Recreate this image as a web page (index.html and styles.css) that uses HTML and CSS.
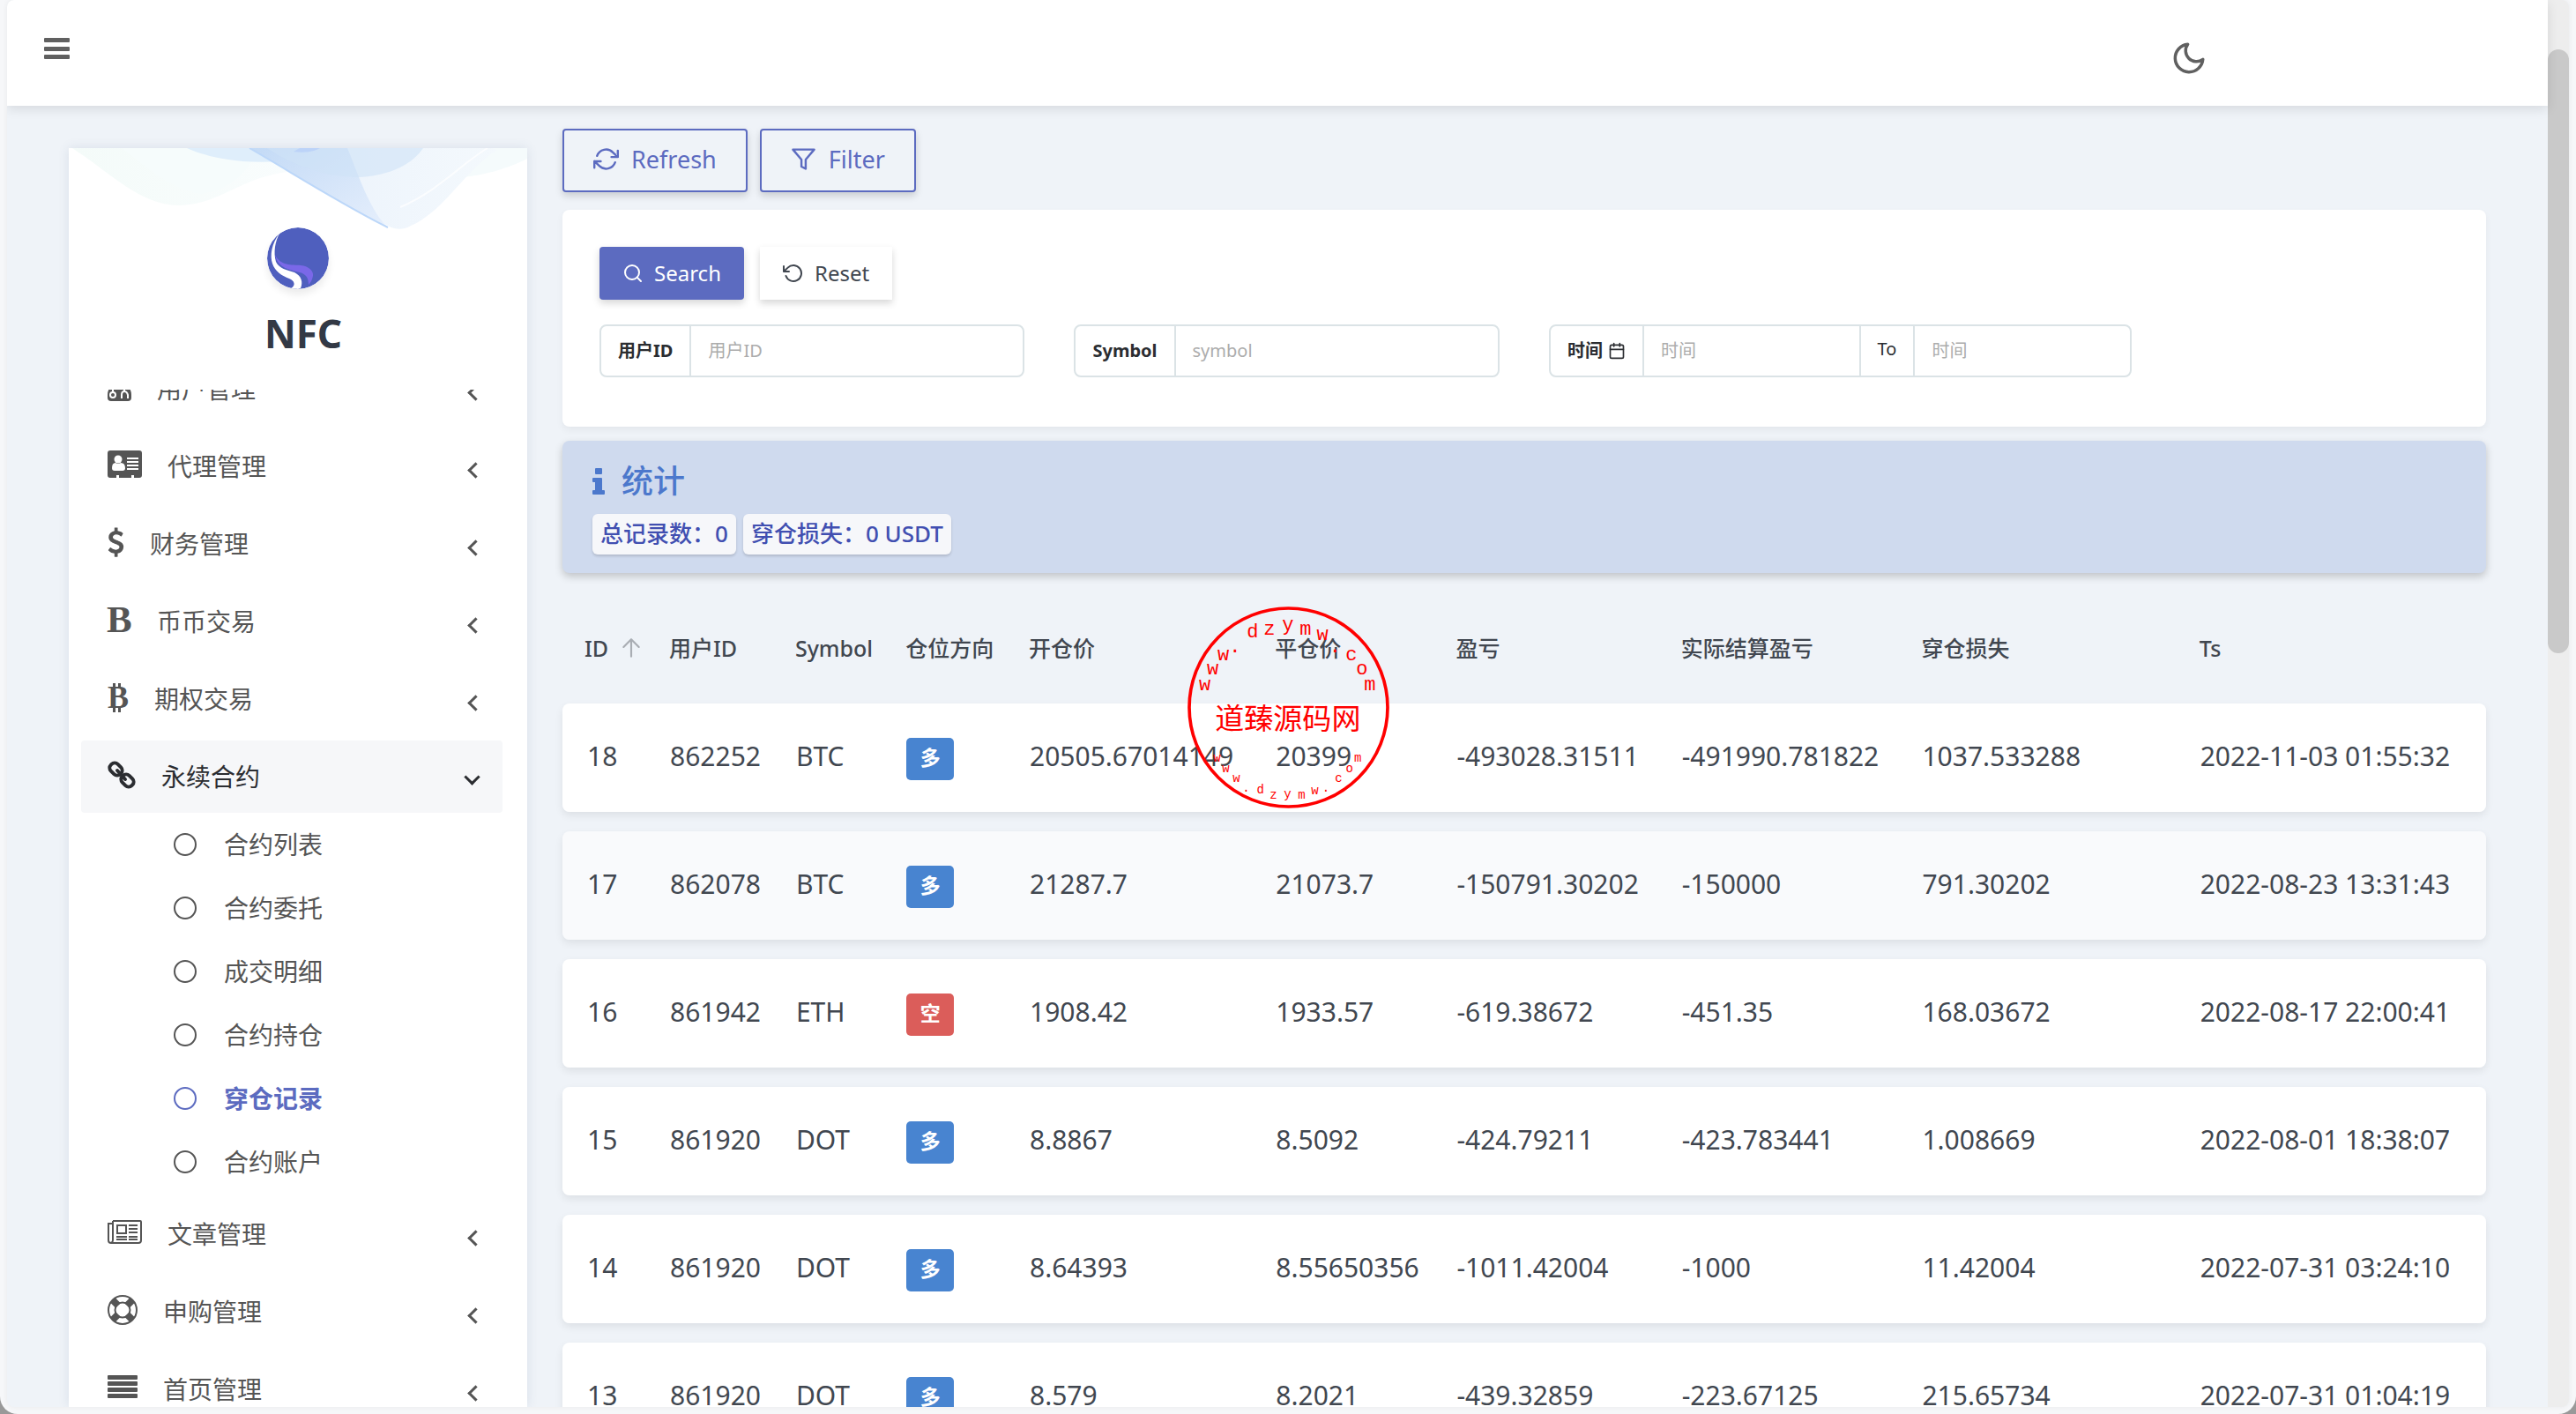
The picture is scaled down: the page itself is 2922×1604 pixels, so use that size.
FILE: index.html
```html
<!DOCTYPE html>
<html lang="zh-CN">
<head>
<meta charset="utf-8">
<title>NFC</title>
<meta name="viewport" content="width=device-width, initial-scale=1">
<link rel="stylesheet" href="styles.css">
</head>
<body>
<div class="frame">
  <div class="window">
    <div class="page">
      <header class="topbar">
        <button class="icon-btn" type="button" aria-label="Menu">
          <svg width="29" height="24" viewBox="0 0 29 24" fill="currentColor"><rect width="29" height="5" rx="1"/><rect y="10" width="29" height="5" rx="1"/><rect y="19" width="29" height="5" rx="1"/></svg>
        </button>
        <button class="icon-btn theme-btn" type="button" aria-label="Theme">
          <svg class="line" width="42" height="42" viewBox="0 0 24 24"><path d="M21 12.79A9 9 0 1 1 11.21 3 7 7 0 0 0 21 12.79z"/></svg>
        </button>
      </header>
      <div class="body">
        <aside class="sidebar">
          <svg class="wave" viewBox="0 0 520 96" preserveAspectRatio="none" aria-hidden="true">
            <defs>
              <linearGradient id="g1" x1="0" y1="0" x2="1" y2="0"><stop offset="0" stop-color="#f4fbf9"/><stop offset="1" stop-color="#fafdfe"/></linearGradient>
              <linearGradient id="g2" x1="0" y1="0" x2="1" y2="1"><stop offset="0" stop-color="#c3daf6"/><stop offset="1" stop-color="#e6effc"/></linearGradient>
              <linearGradient id="g3" x1="0" y1="0" x2="1" y2="0"><stop offset="0" stop-color="#e9f1fb"/><stop offset="1" stop-color="#f4f9fd"/></linearGradient>
            </defs>
            <path d="M4 0C50 30 80 64 125 65C175 64 195 30 260 26L300 0Z" fill="url(#g1)"/>
            <path d="M60 0C90 22 110 44 150 52C190 46 205 22 215 0Z" fill="#f6fcfc"/>
            <path d="M134 0C160 12 200 18 240 15L300 0Z" fill="#dfeefb"/>
            <path d="M430 34C470 33 500 22 520 12V0H400Z" fill="#f5fbfc"/>
            <path d="M205 0L362 88C370 93 380 93 388 88C425 72 450 25 486 2L480 0Z" fill="url(#g3)"/>
            <path d="M205 0C260 32 310 64 362 90C340 70 325 20 316 0Z" fill="url(#g2)"/>
            <path d="M225 0C260 24 300 33 330 33C365 31 390 18 402 0Z" fill="#cfe2f6" opacity=".6"/>
            <path d="M255 4C270 6 280 3 285 0H262Z" fill="#bcd3f8"/>
            <path d="M205 0C260 32 310 64 362 90" fill="none" stroke="#bcd7f9" stroke-width="2"/>
            <path d="M376 67C420 48 445 18 475 0" fill="none" stroke="#fff" stroke-width="2" opacity=".7"/>
          </svg>
          <div class="brand">
            <svg class="logo" viewBox="0 0 70 70" aria-hidden="true">
              <circle cx="35" cy="35" r="35" fill="#4f5fbe"/>
              <path d="M14 7C5 18 3 32 6 41C9 50 17 55 25 58C31 60 33 66 27 69L35 70L38 69C41 62 39 55 31 51C22 48 14 47 10 39C7 28 9 16 14 7Z" fill="#fff"/>
              <path d="M9 31C15 44 28 42 38 43C48 44 53 50 52 55C51 60 49 63 47 65C47 57 44 53 37 51C27 48 12 47 9 31Z" fill="#7a68e8"/>
            </svg>
            <span class="brand-name">NFC</span>
          </div>
          <nav class="menu">
            <ul class="menu-list">
              <li><a class="item" href="#"><svg width="27" height="34" viewBox="0 0 27 34" fill="currentColor"><circle cx="13" cy="9" r="8"/><path d="M5 16h17q5 3 5 10v3q0 4-4 4H4q-4 0-4-4v-3q0-7 5-10z"/><g fill="none" stroke="#fff" stroke-width="2"><circle cx="6" cy="26" r="3"/><path d="M6 16v7M16 30v-4q0-4 3-4t4 4v4M19 16v6"/></g></svg><span>用户管理</span><i class="chev"></i></a></li>
              <li><a class="item" href="#"><svg width="39" height="32" viewBox="0 0 39 32"><path fill="currentColor" d="M3 0h33q3 0 3 3v25q0 3-3 3h-6v-3h-3v3H13v-3h-3v3H3q-3 0-3-3V3q0-3 3-3z"/><g fill="#fff"><circle cx="12" cy="10" r="4.500"/><path d="M5 20q0-6 4-6q3 2 6 0q5 0 5 6q0 3-3 3H8q-3 0-3-3zM22 8h13v2H22zM22 12h13v2H22zM22 16h13v2H22zM22 20h13v2H22z"/></g></svg><span>代理管理</span><i class="chev"></i></a></li>
              <li><a class="item" href="#"><svg width="19" height="34" viewBox="384 0 1024 1792" fill="currentColor"><path d="M1362 1185q0 153-99.500 263.500t-258.500 136.500v175q0 14-9 23t-23 9h-135q-13 0-22.500-9.500t-9.500-22.500v-175q-66-9-127.500-31t-101.500-44.500-74-48-46.500-37.500-17.500-18q-17-21-2-41l103-135q7-10 23-12 15-2 24 9l2 2q113 99 243 125 37 8 74 8 81 0 142.500-43t61.500-122q0-28-15-53t-33.500-42-58.500-37.500-66-32-80-32.500q-39-16-61.500-25t-61.500-26.500-62.500-31-56.500-35.500-53.500-42.500-43.500-49-35.500-58-21-66.500-8.500-78q0-138 98-242t255-134v-180q0-13 9.500-22.500t22.500-9.500h135q14 0 23 9t9 23v176q57 6 110.500 23t87 33.500 63.500 37.500 39 29 15 14q17 18 5 38l-81 146q-8 15-23 16-14 3-27-7-3-3-14.500-12t-39-26.500-58.500-32-74.500-26-85.500-11.500q-95 0-155 43t-60 111q0 26 8.500 48t29.500 41.500 39.500 33 56 31 60.500 27 70 27.500q53 20 81 31.500t76 35 75.500 42.500 62 50 53 63.500 31.500 76.500 13 94z"/></svg><span>财务管理</span><i class="chev"></i></a></li>
              <li><a class="item" href="#"><svg class="serif" width="27" height="34" viewBox="0 0 27 34"><text x="-1" y="31" font-size="43">B</text></svg><span>币币交易</span><i class="chev"></i></a></li>
              <li><a class="item" href="#"><svg class="serif" width="24" height="34" viewBox="0 0 24 34"><text x="0" y="29" font-size="36">B</text><path d="M6 1h3v6H6zM12 1h3v6h-3zM6 28h3v6H6zM12 28h3v6h-3z"/></svg><span>期权交易</span><i class="chev"></i></a></li>
              <li>
                <a class="item open" href="#"><svg width="32" height="34" viewBox="0 0 32 34" fill="none" stroke="currentColor" stroke-width="4"><rect x="2" y="5" width="15" height="11" rx="5" transform="rotate(45 9.500 10.500)"/><rect x="15" y="18" width="15" height="11" rx="5" transform="rotate(45 22.500 23.500)"/><path d="M11 12l9 10" stroke-linecap="round"/></svg><span>永续合约</span><i class="chev"></i></a>
                <ul class="submenu">
                  <li><a class="subitem" href="#"><i class="ring"></i>合约列表</a></li>
                  <li><a class="subitem" href="#"><i class="ring"></i>合约委托</a></li>
                  <li><a class="subitem" href="#"><i class="ring"></i>成交明细</a></li>
                  <li><a class="subitem" href="#"><i class="ring"></i>合约持仓</a></li>
                  <li><a class="subitem active" href="#"><i class="ring"></i>穿仓记录</a></li>
                  <li><a class="subitem" href="#"><i class="ring"></i>合约账户</a></li>
                </ul>
              </li>
              <li><a class="item" href="#"><svg width="39" height="27" viewBox="0 0 39 27" fill="none" stroke="currentColor" stroke-width="2"><path d="M6 1h31q1 0 1 1v21q0 3-3 3H4q-3 0-3-3V4h5v19q0 2-2 3M6 1v5"/><rect x="11" y="6" width="10" height="9"/><path d="M24 6h10M24 10h10M24 14h10M10 19h12M24 19h10M10 22h12M24 22h10"/></svg><span>文章管理</span><i class="chev"></i></a></li>
              <li><a class="item" href="#"><svg width="34" height="34" viewBox="0 0 34 34" fill="none" stroke="currentColor"><circle cx="17" cy="17" r="16" stroke-width="2"/><circle cx="17" cy="17" r="8.500" stroke-width="2"/><path stroke-width="8" d="M6 6l6 6M28 6l-6 6M6 28l6-6M28 28l-6-6"/></svg><span>申购管理</span><i class="chev"></i></a></li>
              <li><a class="item" href="#"><svg width="34" height="27" viewBox="0 0 34 27" fill="currentColor"><rect width="34" height="5" rx="1"/><rect y="7" width="34" height="5" rx="1"/><rect y="14" width="34" height="5" rx="1"/><rect y="21" width="34" height="5" rx="1"/></svg><span>首页管理</span><i class="chev"></i></a></li>
            </ul>
          </nav>
        </aside>
        <main class="content">
          <div class="toolbar">
            <button class="btn outline" type="button"><svg class="line" width="29" height="29" viewBox="0 0 24 24"><path d="M23 4v6h-6M1 20v-6h6M3.510 9a9 9 0 0 1 14.850-3.360L23 10M1 14l4.640 4.360A9 9 0 0 0 20.490 15"/></svg>Refresh</button>
            <button class="btn outline" type="button"><svg class="line" width="29" height="29" viewBox="0 0 24 24"><path d="M22 3H2l8 9.460V19l4 2v-8.540z"/></svg>Filter</button>
          </div>
          <form class="filter">
            <div class="filter-actions">
              <button class="btn primary" type="button"><svg class="line" width="24" height="24" viewBox="0 0 24 24"><circle cx="11" cy="11" r="8"/><path d="M21 21l-4.350-4.350"/></svg>Search</button>
              <button class="btn plain" type="reset"><svg class="line" width="24" height="24" viewBox="0 0 24 24"><path d="M1 4v6h6M3.510 15a9 9 0 1 0 2.130-9.360L1 10"/></svg>Reset</button>
            </div>
            <div class="fields">
              <div class="group"><label for="uid">用户ID</label><input id="uid" type="text" placeholder="用户ID"></div>
              <div class="group"><label for="sym">Symbol</label><input id="sym" type="text" placeholder="symbol"></div>
              <div class="group"><label for="from">时间<svg class="line" width="20" height="20" viewBox="0 0 24 24"><rect x="3" y="4" width="18" height="18" rx="2"/><path d="M16 2v4M8 2v4M3 10h18"/></svg></label><input id="from" type="text" placeholder="时间"><label class="to" for="until">To</label><input id="until" type="text" placeholder="时间"></div>
            </div>
          </form>
          <section class="stats">
            <h2><svg width="14" height="30" viewBox="0 0 14 30" fill="currentColor"><rect x="3" width="8" height="7" rx="1"/><path d="M1 11h9q1 0 1 1v13h2q1 0 1 1v3q0 1-1 1H1q-1 0-1-1v-3q0-1 1-1h2v-9H1q-1 0-1-1v-3q0-1 1-1z"/></svg>统计</h2>
            <div class="tags"><span class="tag">总记录数：0</span><span class="tag">穿仓损失：0 USDT</span></div>
          </section>
          <table class="grid">
            <colgroup><col class="c-id"><col class="c-uid"><col class="c-sym"><col class="c-dir"><col class="c-open"><col class="c-close"><col class="c-pnl"><col class="c-real"><col class="c-loss"><col></colgroup>
            <thead><tr><th>ID<svg class="line sort" width="26" height="26" viewBox="0 0 24 24"><path d="M12 21V3M4 11l8-8 8 8"/></svg></th><th>用户ID</th><th>Symbol</th><th>仓位方向</th><th>开仓价</th><th>平仓价</th><th>盈亏</th><th>实际结算盈亏</th><th>穿仓损失</th><th>Ts</th></tr></thead>
            <tbody>
              <tr><td>18</td><td>862252</td><td>BTC</td><td><span class="badge">多</span></td><td>20505.67014149</td><td>20399</td><td>-493028.31511</td><td>-491990.781822</td><td>1037.533288</td><td>2022-11-03 01:55:32</td></tr>
              <tr class="hover"><td>17</td><td>862078</td><td>BTC</td><td><span class="badge">多</span></td><td>21287.7</td><td>21073.7</td><td>-150791.30202</td><td>-150000</td><td>791.30202</td><td>2022-08-23 13:31:43</td></tr>
              <tr><td>16</td><td>861942</td><td>ETH</td><td><span class="badge short">空</span></td><td>1908.42</td><td>1933.57</td><td>-619.38672</td><td>-451.35</td><td>168.03672</td><td>2022-08-17 22:00:41</td></tr>
              <tr><td>15</td><td>861920</td><td>DOT</td><td><span class="badge">多</span></td><td>8.8867</td><td>8.5092</td><td>-424.79211</td><td>-423.783441</td><td>1.008669</td><td>2022-08-01 18:38:07</td></tr>
              <tr><td>14</td><td>861920</td><td>DOT</td><td><span class="badge">多</span></td><td>8.64393</td><td>8.55650356</td><td>-1011.42004</td><td>-1000</td><td>11.42004</td><td>2022-07-31 03:24:10</td></tr>
              <tr><td>13</td><td>861920</td><td>DOT</td><td><span class="badge">多</span></td><td>8.579</td><td>8.2021</td><td>-439.32859</td><td>-223.67125</td><td>215.65734</td><td>2022-07-31 01:04:19</td></tr>
            </tbody>
          </table>
        </main>
      </div>
    </div>
    <div class="scroll-track"><div class="scroll-thumb"></div></div>
  </div>
  <svg class="stamp" viewBox="142 85 686 686" aria-hidden="true">
    <circle cx="485" cy="428" r="337" fill="none" stroke="#f00" stroke-width="11"/>
    <text class="stamp-title" x="483" y="501">道臻源码网</text>
    <g class="stamp-top">
      <text x="201" y="371">w</text><text x="228" y="317">w</text><text x="264" y="268">w</text><text x="303" y="241">.</text><text x="363" y="190">d</text><text x="420" y="182">z</text><text x="483" y="167">y</text><text x="543" y="182">m</text><text x="601" y="199">w</text><text x="643" y="240">.</text><text x="699" y="267">c</text><text x="735" y="316">o</text><text x="762" y="370">m</text>
    </g>
    <g class="stamp-bottom">
      <text x="242" y="611">w</text><text x="272" y="649">w</text><text x="308" y="682">w</text><text x="341" y="715">.</text><text x="390" y="719">d</text><text x="434" y="738">z</text><text x="482" y="734">y</text><text x="530" y="738">m</text><text x="575" y="724">w</text><text x="612" y="715">.</text><text x="656" y="682">c</text><text x="692" y="649">o</text><text x="721" y="613">m</text>
    </g>
  </svg>
</div>
</body>
</html>
```
FILE: styles.css
```css
* { box-sizing: border-box; }
body {
  margin: 0;
  background: #999;
  color: #414750;
  font: 28px/40px "Noto Sans", "Noto Sans CJK SC", sans-serif;
}
ul { list-style: none; margin: 0; padding: 0; }
a { color: inherit; text-decoration: none; }
button, input { font: inherit; color: inherit; }
.line { fill: none; stroke: currentColor; stroke-width: 2; stroke-linecap: round; stroke-linejoin: round; }

/* Window shell */
.frame {
  position: relative;
  height: 100vh;
  padding: 0 8px 8px;
  background: #f6f7f9;
  border-radius: 0 0 20px 20px;
  overflow: hidden;
}
.window {
  display: flex;
  height: 100%;
  border-radius: 8px;
  background: #eff3f8;
  box-shadow: 0 0 6px rgba(0, 0, 0, .06);
  overflow: hidden;
}
.page { flex: 1; min-width: 0; display: flex; flex-direction: column; }
.scroll-track { width: 24px; background: #ededed; padding-top: 56px; }
.scroll-thumb { height: 44.5%; border-radius: 12px; background: #c9c9c9; }

.topbar {
  display: flex;
  justify-content: space-between;
  flex: none;
  height: 120px;
  padding: 0 386px 0 42px;
  background: #fff;
  color: #606060;
  box-shadow: 0 4px 12px rgba(0, 0, 0, .1);
  z-index: 1;
}
.icon-btn { display: flex; align-items: center; height: 110px; padding: 0; border: 0; background: none; }
.theme-btn { height: 132px; }

.body { flex: 1; min-height: 0; display: flex; gap: 40px; padding: 0 70px; overflow: hidden; }

/* Sidebar */
.sidebar {
  display: flex;
  flex-direction: column;
  flex: none;
  width: 520px;
  margin-top: 48px;
  background: #fff;
  box-shadow: 0 0 12px rgba(60, 80, 120, .12);
  color: #555;
  position: relative;
}
.wave { position: absolute; top: 0; left: 0; width: 100%; height: 96px; }
.brand { display: flex; flex-direction: column; align-items: center; height: 274px; padding-top: 90px; flex: none; }
.logo { width: 70px; height: 70px; border-radius: 50%; box-shadow: 0 6px 8px rgba(0, 0, 0, .08); }
.brand-name { padding: 20px 0 0 12px; font-size: 44px; line-height: 60px; font-weight: 700; color: #333945; }
.menu { flex: 1; min-height: 0; padding: 0 28px 0 14px; overflow: hidden; }
.menu-list { margin-top: -42px; }
.item {
  display: flex;
  align-items: center;
  gap: 29px;
  height: 82px;
  margin-bottom: 6px;
  padding: 0 28px 0 30px;
  border-radius: 4px;
}
.item svg { margin-bottom: 5px; flex: none; }
.item.open { background: #f6f7f9; color: #2b2d31; margin-bottom: 0; }
.serif { font-family: "Liberation Serif", serif; font-weight: 700; fill: currentColor; overflow: visible; }
.chev {
  width: 13px;
  height: 13px;
  margin: 8px -4px 0 auto;
  border: solid currentColor;
  border-width: 0 0 3px 3px;
  transform: rotate(45deg);
}
.open .chev { transform: rotate(-45deg); margin: 0 0 0 auto; }
.subitem { display: flex; align-items: center; gap: 31px; height: 72px; padding-left: 105px; }
.submenu { padding-bottom: 5px; }
.ring { width: 26px; height: 26px; border: 2px solid currentColor; border-radius: 50%; }
.subitem.active { color: #5c6bc0; font-weight: 700; }

/* Content */
.content { flex: 1; min-width: 0; padding-top: 26px; }
.btn {
  display: flex;
  align-items: center;
  border-radius: 4px;
  border: 0;
  box-shadow: 0 4px 8px rgba(0, 0, 0, .16);
}
.toolbar, .filter-actions { display: flex; gap: 14px; }
.outline { height: 72px; gap: 14px; padding: 0 33px 3px; border: 2px solid #5c6bc0; background: #eff3f8; color: #5c6bc0; font-size: 27px; }
.primary, .plain { height: 60px; padding: 0 26px; gap: 12px; font-size: 24px; }
.primary { background: #5c6bc0; color: #fff; }
.plain { background: #fff; border-radius: 0; }
.filter-actions { gap: 18px; }
.filter {
  height: 246px;
  margin-top: 20px;
  padding: 42px;
  border-radius: 8px;
  background: #fff;
  box-shadow: 0 4px 8px rgba(0, 0, 0, .05);
}
.fields { display: grid; grid-template-columns: minmax(0, 100fr) minmax(0, 100fr) minmax(0, 137fr) minmax(0, 63fr); gap: 56px; margin-top: 28px; font-size: 20px; }
.group { display: flex; height: 60px; border: 2px solid #dbe3e6; border-radius: 8px; }
.group label { display: flex; align-items: center; gap: 6px; padding: 0 19px; font-weight: 700; color: #2b2d31; white-space: nowrap; }
.group .to { border-left: 2px solid #dbe3e6; font-weight: 400; padding-bottom: 4px; }
.group input { flex: 1; min-width: 0; padding: 0 19px; border: 0; border-left: 2px solid #dbe3e6; background: none; outline: 0; }
.group input::placeholder { color: #acacac; opacity: 1; }

.stats {
  height: 150px;
  margin-top: 16px;
  padding: 22px 34px;
  border-radius: 8px;
  background: #cfdaee;
  box-shadow: 0 4px 10px rgba(0, 0, 0, .2);
}
.stats h2 { display: flex; align-items: center; gap: 19px; margin: 0; font-size: 36px; line-height: 48px; font-weight: 500; color: #4c78cc; }
.tags { display: flex; gap: 8px; margin-top: 13px; }
.tag { height: 46px; padding: 0 9px; border-radius: 6px; background: #f6f7fa; color: #414fb1; font-size: 26px; line-height: 44px; font-weight: 500; box-shadow: 0 2px 3px rgba(0, 0, 0, .15); }

/* Records table */
.grid { width: 100%; margin-top: 22px; table-layout: fixed; border-spacing: 0 22px; white-space: nowrap; }
.grid th { height: 82px; padding: 0 0 0 1px; text-align: left; font-size: 25px; font-weight: 500; }
.grid td { height: 123px; padding: 0 0 4px 2px; font-size: 30px; }
.grid th:first-child { padding-left: 25px; }
.grid td:first-child { padding-left: 28px; border-radius: 8px 0 0 8px; }
.grid td:last-child { border-radius: 0 8px 8px 0; }
.grid tbody tr { border-radius: 8px; box-shadow: 0 4px 10px rgba(0, 0, 0, .08); }
.grid tbody td { background: #fff; }
.grid tbody .hover td { background: #f9fafc; }
.sort { margin-left: 13px; vertical-align: -3px; color: #a9adb3; }
.badge { display: block; width: 54px; height: 48px; margin-top: 6px; border-radius: 5px; background: #4884d0; color: #fff; font-size: 23px; line-height: 44px; font-weight: 700; text-align: center; }
.short { background: #db5d5a; }
.c-id { width: 5.5%; }
.c-uid { width: 6.55%; }
.c-sym { width: 5.75%; }
.c-dir { width: 6.4%; }
.c-open { width: 12.8%; }
.c-close { width: 9.4%; }
.c-pnl { width: 11.7%; }
.c-real { width: 12.5%; }
.c-loss { width: 14.45%; }

/* Centered stamp over the page */
.stamp { position: absolute; left: 50%; top: 50%; width: 229px; height: 229px; margin: -114px 0 0 -114px; z-index: 2; fill: #f00; font-family: "Liberation Mono", monospace; pointer-events: none; }
.stamp text { text-anchor: middle; }
.stamp-title { font-family: "Noto Sans CJK SC", sans-serif; font-size: 99px; }
.stamp-top { font-size: 66px; }
.stamp-bottom { font-size: 42px; }
```
